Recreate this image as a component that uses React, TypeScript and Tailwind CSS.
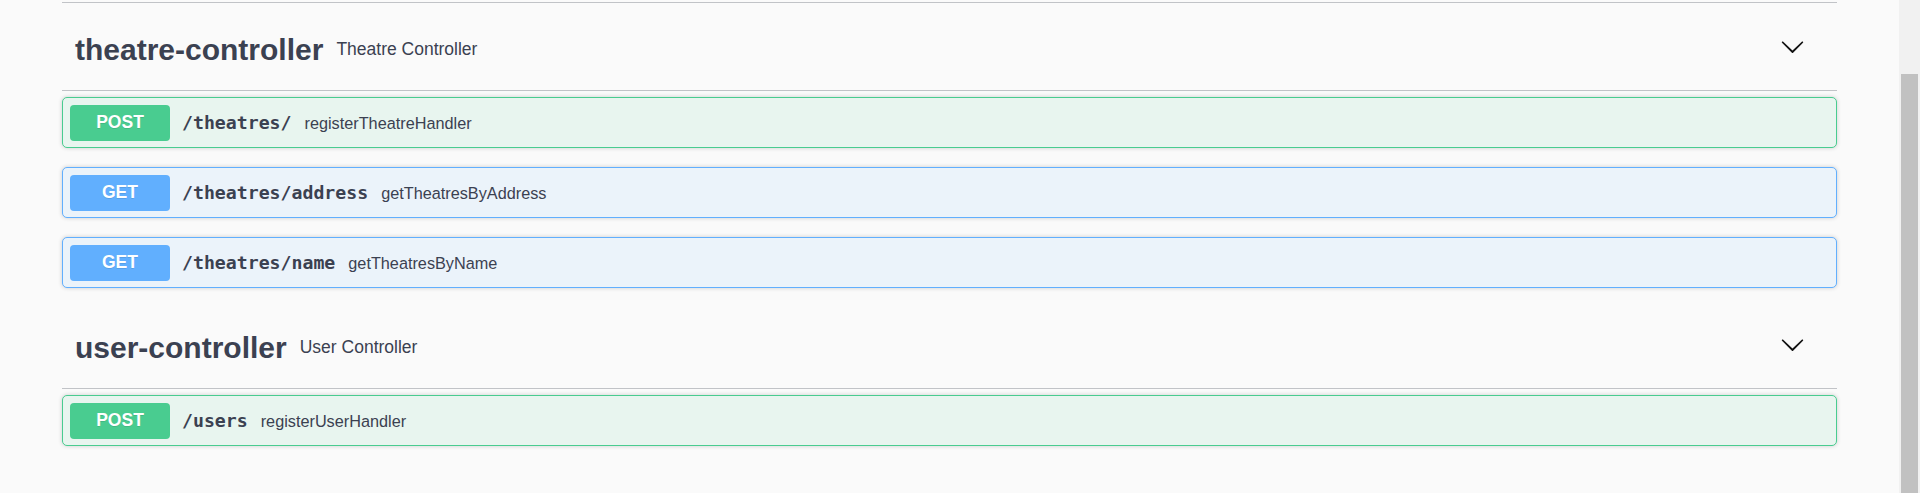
import React from 'react';

type Method = 'POST' | 'GET';

interface Operation {
  method: Method;
  path: string;
  summary: string;
}

interface TagSection {
  name: string;
  description: string;
  operations: Operation[];
}

const sections: TagSection[] = [
  {
    name: 'theatre-controller',
    description: 'Theatre Controller',
    operations: [
      { method: 'POST', path: '/theatres/', summary: 'registerTheatreHandler' },
      { method: 'GET', path: '/theatres/address', summary: 'getTheatresByAddress' },
      { method: 'GET', path: '/theatres/name', summary: 'getTheatresByName' },
    ],
  },
  {
    name: 'user-controller',
    description: 'User Controller',
    operations: [{ method: 'POST', path: '/users', summary: 'registerUserHandler' }],
  },
];

const sans = "font-['Liberation_Sans',Arial,sans-serif]";
const mono = "font-['DejaVu_Sans_Mono','Liberation_Mono',monospace]";

function Chevron() {
  return (
    <svg width="25" height="25" viewBox="0 0 20 20" className="mb-[6px] fill-[#111]" aria-hidden>
      <path d="M17.418 6.109c.272-.268.709-.268.979 0s.271.701 0 .969l-7.908 7.83c-.27.268-.707.268-.979 0l-7.908-7.83c-.27-.268-.27-.701 0-.969.271-.268.709-.268.979 0L10 13.25l7.418-7.141z" />
    </svg>
  );
}

function OperationRow({ op }: { op: Operation }) {
  const isPost = op.method === 'POST';
  return (
    <div
      className={`mb-[19px] flex items-center rounded-[5px] border pl-[7px] pt-[7px] pb-[6px] shadow-[0_0_4px_rgba(0,0,0,0.19)] ${
        isPost ? 'border-[#49cc90] bg-[#e8f5ef]' : 'border-[#61affe] bg-[#ebf3fa]'
      }`}
    >
      <span
        className={`${sans} flex h-[36px] w-[100px] items-center justify-center rounded-[4px] text-[17.5px] leading-none font-bold text-white [text-shadow:0_1px_0_rgba(0,0,0,0.1)] ${
          isPost ? 'bg-[#49cc90]' : 'bg-[#61affe]'
        }`}
      >
        {op.method}
      </span>
      <span className={`${mono} pl-[12px] pr-[13px] text-[18.2px] leading-none font-bold text-[#3b4151]`}>
        {op.path}
      </span>
      <span className={`${sans} text-[16.25px] leading-none text-[#3b4151]`}>{op.summary}</span>
    </div>
  );
}

function Section({ section }: { section: TagSection }) {
  return (
    <div>
      <h3 className="mt-[6px] flex h-[82px] items-center border-b border-[#c1c3c7] pl-[13px] pr-[32px]">
        <span className={`${sans} text-[30px] leading-none font-bold text-[#3b4151]`}>{section.name}</span>
        <span className={`${sans} flex-1 pl-[13px] text-[17.5px] leading-none text-[#3b4151]`}>
          {section.description}
        </span>
        <Chevron />
      </h3>
      <div className="pt-[6px]">
        {section.operations.map((op) => (
          <OperationRow key={op.method + op.path} op={op} />
        ))}
      </div>
    </div>
  );
}

export default function App() {
  return (
    <div className="flex h-[493px] w-[1920px] overflow-hidden bg-[#fafafa]">
      <div className="flex-1">
        <div className="mx-auto w-[1775px]">
          {/* previous collapsed tag */}
          <div className="h-[3px] border-b border-[#c1c3c7]" />
          {sections.map((s) => (
            <Section key={s.name} section={s} />
          ))}
        </div>
      </div>
      {/* scrollbar */}
      <div className="flex w-[21px] flex-col bg-[#f1f1f1] pt-[74px] pl-[2px] pr-[2px]">
        <div className="flex-1 bg-[#c1c1c1]" />
      </div>
    </div>
  );
}
